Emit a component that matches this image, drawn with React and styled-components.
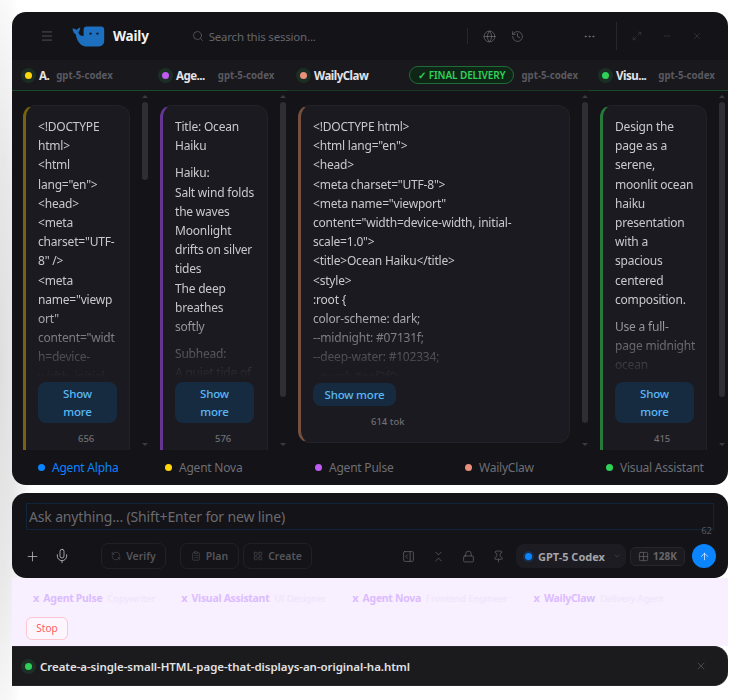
import React from "react";
import styled, { createGlobalStyle } from "styled-components";
import {
  Menu,
  Search,
  Globe,
  History,
  Ellipsis,
  Maximize2,
  Minus,
  X,
  Plus,
  Mic,
  RefreshCcw,
  ClipboardList,
  LayoutGrid,
  PanelRightOpen,
  ChevronsDownUp,
  Lock,
  Pin,
  ChevronDown,
  Grid2x2,
  ArrowUp,
} from "lucide-react";

const FONT = `"Noto Sans", "Open Sans", sans-serif`;

const columns = [
  {
    name: "A.",
    dot: "#ffd60a",
    edge: "#75630f",
    gap: 7,
    width: 137,
    thumb: 78,
    tokens: "656",
    tokenOffset: 40,
    paragraphs: [
      [
        "<!DOCTYPE html>",
        '<html lang="en">',
        "<head>",
        '<meta charset="UTF-8" />',
        '<meta name="viewport"',
        'content="width=device-width, initial-scale=1.0" />',
      ],
    ],
  },
  {
    name: "Age...",
    dot: "#bf5af2",
    edge: "#653590",
    gap: 13,
    width: 138,
    thumb: 295,
    tokens: "576",
    tokenOffset: 40,
    paragraphs: [
      ["Title: Ocean Haiku"],
      ["Haiku:", "Salt wind folds the waves", "Moonlight drifts on silver tides", "The deep", "breathes", "softly"],
      ["Subhead:", "A quiet tide of words"],
    ],
  },
  {
    name: "WailyClaw",
    dot: "#e8907a",
    edge: "#76503f",
    final: true,
    gap: 7,
    width: 302,
    thumb: 321,
    tokens: "614 tok",
    tokenOffset: 58,
    wide: true,
    paragraphs: [
      [
        "<!DOCTYPE html>",
        '<html lang="en">',
        "<head>",
        '<meta charset="UTF-8">',
        '<meta name="viewport"',
        'content="width=device-width, initial-scale=1.0">',
        "<title>Ocean Haiku</title>",
        "<style>",
        ":root {",
        "color-scheme: dark;",
        "--midnight: #07131f;",
        "--deep-water: #102334;",
        "--pearl: #eef3f0;",
      ],
    ],
  },
  {
    name: "Visu...",
    dot: "#30d158",
    edge: "#277a3c",
    gap: 12,
    width: 137,
    thumb: 295,
    tokens: "415",
    tokenOffset: 39,
    paragraphs: [
      ["Design the page as a serene, moonlit ocean haiku presentation with a spacious centered composition."],
      ["Use a full-page midnight ocean background."],
    ],
  },
];

const footerTabs = [
  { label: "Agent Alpha", dot: "#0a84ff", active: true },
  { label: "Agent Nova", dot: "#ffd60a" },
  { label: "Agent Pulse", dot: "#bf5af2" },
  { label: "WailyClaw", dot: "#e8907a" },
  { label: "Visual Assistant", dot: "#30d158" },
];

const chips = [
  { name: "Agent Pulse", role: "Copywriter" },
  { name: "Visual Assistant", role: "UI Designer" },
  { name: "Agent Nova", role: "Frontend Engineer" },
  { name: "WailyClaw", role: "Delivery Agent" },
];

function WhaleLogo() {
  return (
    <svg width="33" height="21" viewBox="0 0 33 21">
      <path
        d="M0.5 2.5C2 2.5 3.6 3 4.6 4C5.4 3 6.6 1.9 8.3 1.5C8.2 3.4 7.6 5 6.4 6.2C7 9 8.8 10 11.6 10V3.5C11.6 1.6 12.8 0.5 14.6 0.5H29C31 0.5 32.2 1.7 32.2 3.6V15C32.2 18.4 29.6 20.5 26 20.5H15C9.4 20.5 5.2 16.4 3.8 8.4C2 7.6 0.8 5.4 0.5 2.5Z"
        fill="#1d6fbf"
      />
      <circle cx="18.5" cy="7.6" r="1.2" fill="#0e1a2c" />
      <circle cx="25.5" cy="7.6" r="1.2" fill="#0e1a2c" />
    </svg>
  );
}

function Column({ column }) {
  return (
    <ColumnWrap $width={column.width}>
      <ScrollArea>
        <Card $edge={column.edge} $wide={column.wide}>
          <CardText $wide={column.wide}>
            {column.paragraphs.map((lines, i) => (
              <Paragraph key={i}>
                {lines.map((line) => (
                  <Line key={line}>{line}</Line>
                ))}
              </Paragraph>
            ))}
          </CardText>
          <ShowMore $wide={column.wide}>Show more</ShowMore>
          <Tokens $offset={column.tokenOffset}>{column.tokens}</Tokens>
        </Card>
      </ScrollArea>
      <ScrollBar>
        <ArrowUpTip />
        <Track>
          <Thumb $height={column.thumb} />
        </Track>
        <ArrowDownTip />
      </ScrollBar>
    </ColumnWrap>
  );
}

export default function App() {
  return (
    <>
      <GlobalStyle />
      <Page>
        <MainPanel>
          <Header>
            <IconSlot $color="#55555c">
              <Menu size={14} strokeWidth={1.5} />
            </IconSlot>
            <Brand>
              <WhaleLogo />
              <BrandName>Waily</BrandName>
            </Brand>
            <SearchBox>
              <Search size={12} strokeWidth={1.5} color="#606066" />
              <SearchText>Search this session...</SearchText>
            </SearchBox>
            <Divider $height={16} />
            <HeaderIcons>
              <Globe size={13} strokeWidth={1.2} />
              <History size={13} strokeWidth={1.2} />
            </HeaderIcons>
            <MoreSlot>
              <Ellipsis size={13} strokeWidth={1.5} />
            </MoreSlot>
            <Divider $height={28} />
            <WindowIcons>
              <Maximize2 size={10} strokeWidth={1.2} />
              <Minus size={10} strokeWidth={1.2} />
              <X size={10} strokeWidth={1.2} />
            </WindowIcons>
          </Header>

          <TabRow>
            {columns.map((c) => (
              <TabCell key={c.name} $width={c.width} $dim={c.final}>
                <Dot $color={c.dot} $halo />
                <TabName>{c.name}</TabName>
                {c.final && <FinalBadge>✓ FINAL DELIVERY</FinalBadge>}
                <ModelName $gap={c.gap}>gpt-5-codex</ModelName>
              </TabCell>
            ))}
          </TabRow>

          <Board>
            {columns.map((c) => (
              <Column key={c.name} column={c} />
            ))}
          </Board>

          <FooterTabs>
            {footerTabs.map((t) => (
              <FooterTab key={t.label} $active={t.active}>
                <SmallDot $color={t.dot} />
                {t.label}
              </FooterTab>
            ))}
          </FooterTabs>
        </MainPanel>

        <Composer>
          <InputBox>
            <Placeholder>Ask anything... (Shift+Enter for new line)</Placeholder>
            <Counter>62</Counter>
          </InputBox>
          <Toolbar>
            <ToolIcon $color="#c4c4c8" $width={30}>
              <Plus size={15} strokeWidth={1.2} />
            </ToolIcon>
            <ToolIcon $color="#c4c4c8" $width={30}>
              <Mic size={16} strokeWidth={1.2} />
            </ToolIcon>
            <ActionButton $left={24} $width={65}>
              <RefreshCcw size={10} strokeWidth={1.3} />
              Verify
            </ActionButton>
            <ActionButton $left={14} $width={59}>
              <ClipboardList size={10} strokeWidth={1.3} />
              Plan
            </ActionButton>
            <ActionButton $left={4} $width={69}>
              <LayoutGrid size={10} strokeWidth={1.3} />
              Create
            </ActionButton>
            <RightTools>
              <ToolIcon $color="#707076" $width={30}>
                <PanelRightOpen size={13} strokeWidth={1.2} />
              </ToolIcon>
              <ToolIcon $color="#707076" $width={30}>
                <ChevronsDownUp size={13} strokeWidth={1.2} />
              </ToolIcon>
              <ToolIcon $color="#707076" $width={30}>
                <Lock size={13} strokeWidth={1.2} />
              </ToolIcon>
              <ToolIcon $color="#707076" $width={30}>
                <Pin size={13} strokeWidth={1.2} />
              </ToolIcon>
              <ModelPill>
                <Dot $color="#0a84ff" />
                <span>GPT-5 Codex</span>
                <ChevronDown size={8} strokeWidth={1.4} color="#55555c" />
              </ModelPill>
              <ContextPill>
                <Grid2x2 size={11} strokeWidth={1.5} />
                128K
              </ContextPill>
              <SendButton>
                <ArrowUp size={11} strokeWidth={1.5} color="#fff" />
              </SendButton>
            </RightTools>
          </Toolbar>
        </Composer>

        <AgentTray>
          <ChipRow>
            {chips.map((c) => (
              <Chip key={c.name}>
                <ChipX>x</ChipX>
                <ChipName>{c.name}</ChipName>
                <ChipRole>{c.role}</ChipRole>
              </Chip>
            ))}
          </ChipRow>
          <StopButton>Stop</StopButton>
        </AgentTray>

        <FileBar>
          <Dot $color="#30d158" $halo />
          <FileName>Create-a-single-small-HTML-page-that-displays-an-original-ha.html</FileName>
          <CloseSlot>
            <X size={12} strokeWidth={1} />
          </CloseSlot>
        </FileBar>
      </Page>
    </>
  );
}

const GlobalStyle = createGlobalStyle`
  html, body {
    margin: 0;
    padding: 0;
  }
  body {
    background: radial-gradient(ellipse 34px 420px at 0 52%, #dedede 0%, #e8e8e8 50%, #ffffff 100%) #fff;
    font-family: ${FONT};
  }
  * {
    box-sizing: border-box;
  }
`;

const Page = styled.div`
  width: 740px;
  height: 700px;
  padding: 12px;
  display: flex;
  flex-direction: column;
  overflow: hidden;
`;

const MainPanel = styled.section`
  height: 473px;
  flex-shrink: 0;
  display: flex;
  flex-direction: column;
  background: #131318;
  border-radius: 14px;
  overflow: hidden;
  margin-bottom: 8px;
`;

const Header = styled.header`
  height: 48px;
  flex-shrink: 0;
  display: flex;
  align-items: center;
  padding-left: 28px;
`;

const IconSlot = styled.span`
  display: flex;
  color: ${(p) => p.$color};
`;

const Brand = styled.div`
  display: flex;
  align-items: center;
  gap: 8px;
  margin-left: 18px;
`;

const BrandName = styled.span`
  color: #f2f2f4;
  font-size: 13.5px;
  font-weight: 700;
  letter-spacing: -0.2px;
`;

const SearchBox = styled.div`
  width: 275px;
  margin-left: 43px;
  display: flex;
  align-items: center;
  gap: 5px;
`;

const SearchText = styled.span`
  color: #66666c;
  font-size: 11.5px;
  letter-spacing: -0.2px;
`;

const Divider = styled.span`
  width: 1px;
  height: ${(p) => p.$height}px;
  background: #26262b;
`;

const HeaderIcons = styled.div`
  display: flex;
  align-items: center;
  gap: 15px;
  margin-left: 15px;
  color: #77777d;
`;

const MoreSlot = styled.span`
  display: flex;
  color: #77777d;
  margin: 0 20px 0 59px;
`;

const WindowIcons = styled.div`
  display: flex;
  align-items: center;
  gap: 20px;
  margin-left: 15px;
  color: #4a4a50;
`;

const TabRow = styled.div`
  height: 31px;
  flex-shrink: 0;
  display: flex;
  background: #18181d;
`;

const TabCell = styled.div`
  width: ${(p) => p.$width}px;
  display: flex;
  align-items: center;
  padding: 0 11px 0 9px;
  border-bottom: 1px solid ${(p) => (p.$dim ? "#1b3a26" : "#1a4a2a")};

  &:last-child {
    flex: 1;
  }
`;

const Dot = styled.span`
  width: 7px;
  height: 7px;
  flex-shrink: 0;
  border-radius: 50%;
  margin: 0 4px;
  background: ${(p) => p.$color};
  box-shadow: ${(p) => (p.$halo ? "0 0 0 4px rgba(48, 209, 88, 0.12)" : "0 0 0 2px rgba(10, 132, 255, 0.2)")};
`;

const TabName = styled.span`
  margin-left: 3px;
  color: #e4e4e6;
  font-size: 11.5px;
  font-weight: 700;
  letter-spacing: -0.5px;
  white-space: nowrap;
`;

const ModelName = styled.span`
  margin-left: ${(p) => p.$gap}px;
  color: #5a5a60;
  font-size: 9.7px;
  font-weight: 700;
  white-space: nowrap;
`;

const FinalBadge = styled.span`
  margin-left: auto;
  height: 18px;
  width: 105px;
  flex-shrink: 0;
  display: flex;
  align-items: center;
  justify-content: center;
  border: 1px solid #1f6b3a;
  border-radius: 9px;
  background: #0f2617;
  color: #30d158;
  font-size: 10px;
  font-weight: 600;
  letter-spacing: -0.1px;
  white-space: nowrap;
`;

const Board = styled.div`
  height: 359px;
  flex-shrink: 0;
  display: flex;
  padding-right: 2px;
`;

const ColumnWrap = styled.div`
  width: ${(p) => p.$width}px;
  display: flex;
  overflow: hidden;
`;

const ScrollArea = styled.div`
  flex: 1;
  min-width: 0;
  height: 100%;
  overflow: hidden;
  padding: 14px 11px 0 11px;
`;

const Card = styled.article`
  background: #1a1a20;
  border: 1px solid #222228;
  border-left: 3px solid ${(p) => p.$edge};
  border-radius: 12px;
  padding: 11px 10px 0 12px;
  height: ${(p) => (p.$wide ? "338px" : "360px")};
`;

const CardText = styled.div`
  height: 261px;
  overflow: hidden;
  color: #c9c9cd;
  font-size: 12px;
  letter-spacing: -0.2px;
  line-height: 19.2px;
  overflow-wrap: anywhere;
  -webkit-mask-image: linear-gradient(to bottom, #000 72%, transparent 100%);
  mask-image: linear-gradient(to bottom, #000 72%, transparent 100%);
`;

const Paragraph = styled.div`
  margin-bottom: 8px;
`;

const Line = styled.div``;

const ShowMore = styled.button`
  display: block;
  width: ${(p) => (p.$wide ? "83px" : "79px")};
  height: ${(p) => (p.$wide ? "23px" : "41px")};
  margin-top: ${(p) => (p.$wide ? "5px" : "4px")};
  padding: ${(p) => (p.$wide ? "0" : "0 10px")};
  border: none;
  border-radius: 8px;
  background: #162a40;
  color: #5ab8f5;
  font-family: ${FONT};
  font-size: 11.5px;
  font-weight: 500;
  letter-spacing: -0.2px;
  line-height: 17.5px;
`;

const Tokens = styled.div`
  margin: 9px 0 0 ${(p) => p.$offset}px;
  color: #6e6e74;
  font-size: 9.5px;
  font-weight: 500;
  line-height: 14px;
`;

const ScrollBar = styled.div`
  width: 8px;
  flex-shrink: 0;
  display: flex;
  flex-direction: column;
  align-items: center;
  padding: 4px 0 4px;
`;

const ArrowUpTip = styled.span`
  border: 3.5px solid transparent;
  border-top: 0;
  border-bottom: 3.5px solid #3a3a40;
`;

const ArrowDownTip = styled.span`
  border: 3.5px solid transparent;
  border-bottom: 0;
  border-top: 3.5px solid #3a3a40;
`;

const Track = styled.div`
  flex: 1;
  width: 6px;
  margin-top: 4px;
`;

const Thumb = styled.div`
  width: 6px;
  height: ${(p) => p.$height}px;
  border-radius: 3px;
  background: #2e2e34;
`;

const FooterTabs = styled.nav`
  flex: 1;
  display: grid;
  grid-template-columns: 127px 150px 150px 141px 1fr;
  align-items: center;
  padding-left: 24px;
`;

const FooterTab = styled.div`
  display: flex;
  align-items: center;
  gap: 7px;
  color: ${(p) => (p.$active ? "#0a84ff" : "#6e6e74")};
  font-size: 12px;
  letter-spacing: -0.22px;
  white-space: nowrap;
`;

const SmallDot = styled.span`
  width: 7px;
  height: 7px;
  border-radius: 50%;
  margin: 0 0 0 2px;
  background: ${(p) => p.$color};
`;

const Composer = styled.section`
  height: 85px;
  flex-shrink: 0;
  background: #131318;
  border-radius: 14px;
  padding: 10px 14px 0;
`;

const InputBox = styled.div`
  position: relative;
  height: 27px;
  border: 1px solid #10253b;
  padding-left: 2px;
  display: flex;
  align-items: center;
`;

const Placeholder = styled.span`
  color: #6a6a70;
  font-size: 14px;
  letter-spacing: -0.15px;
`;

const Counter = styled.span`
  position: absolute;
  right: 1px;
  bottom: -8px;
  color: #55555b;
  font-size: 9.5px;
`;

const Toolbar = styled.div`
  display: flex;
  align-items: center;
  height: 26px;
  margin: 13px 0 0 -9px;
`;

const ToolIcon = styled.span`
  width: ${(p) => p.$width}px;
  height: 24px;
  display: flex;
  align-items: center;
  justify-content: center;
  color: ${(p) => p.$color};
`;

const ActionButton = styled.button`
  width: ${(p) => p.$width}px;
  height: 26px;
  margin-left: ${(p) => p.$left}px;
  padding: 0;
  display: flex;
  align-items: center;
  justify-content: center;
  gap: 5px;
  background: transparent;
  border: 1px solid #202025;
  border-radius: 7px;
  color: #55555b;
  font-family: ${FONT};
  font-size: 10.5px;
  font-weight: 600;
`;

const RightTools = styled.div`
  margin-left: auto;
  display: flex;
  align-items: center;
`;

const ModelPill = styled.div`
  width: 110px;
  height: 24px;
  margin-left: 3px;
  padding-left: 5px;
  display: flex;
  align-items: center;
  gap: 2px;
  background: #1c1c22;
  border-radius: 8px;
  color: #a4a4aa;
  font-size: 11px;
  font-weight: 700;
  white-space: nowrap;

  svg {
    margin-left: 6px;
  }
`;

const ContextPill = styled.div`
  width: 55px;
  height: 19px;
  margin-left: 4px;
  display: flex;
  align-items: center;
  justify-content: center;
  gap: 4px;
  background: #1a1a1f;
  border: 1px solid #26262b;
  border-radius: 5px;
  color: #66666c;
  font-size: 10px;
  font-weight: 700;
`;

const SendButton = styled.button`
  width: 24px;
  height: 24px;
  margin: 0 -2px 0 7px;
  padding: 0;
  display: flex;
  align-items: center;
  justify-content: center;
  background: #0a84ff;
  border: none;
  border-radius: 50%;
`;

const AgentTray = styled.section`
  height: 68px;
  flex-shrink: 0;
  background: #f8efff;
  padding: 12px 14px 0;
`;

const ChipRow = styled.div`
  display: flex;
  gap: 26px;
  padding-left: 7px;
  height: 25px;
`;

const Chip = styled.div`
  display: flex;
  align-items: baseline;
  font-size: 11px;
  white-space: nowrap;
`;

const ChipX = styled.span`
  color: #dcbcff;
  font-weight: 700;
  font-size: 11px;
  margin-right: 4px;
`;

const ChipName = styled.span`
  color: #dcbcff;
  font-weight: 700;
  font-size: 10.5px;
  letter-spacing: -0.3px;
`;

const ChipRole = styled.span`
  margin-left: 5px;
  color: #efe4f9;
  font-size: 9.5px;
  letter-spacing: -0.1px;
`;

const StopButton = styled.button`
  width: 42px;
  height: 23px;
  padding: 0;
  background: #fdf7fd;
  border: 1px solid #ffc6cf;
  border-radius: 6px;
  color: #ff5a5f;
  font-family: ${FONT};
  font-size: 10px;
`;

const FileBar = styled.div`
  height: 40px;
  flex-shrink: 0;
  display: flex;
  align-items: center;
  padding: 0 21px 0 9px;
  background: #1b1b1e;
  border-top: 1px solid #26262a;
  border-bottom: 1px solid #26262a;
  border-radius: 0 14px 14px 0;
`;

const FileName = styled.span`
  margin-left: 4px;
  color: #e2e2e4;
  font-size: 11.5px;
  font-weight: 600;
  letter-spacing: -0.05px;
  white-space: nowrap;
`;

const CloseSlot = styled.span`
  margin-left: auto;
  display: flex;
  color: #77777d;
`;
